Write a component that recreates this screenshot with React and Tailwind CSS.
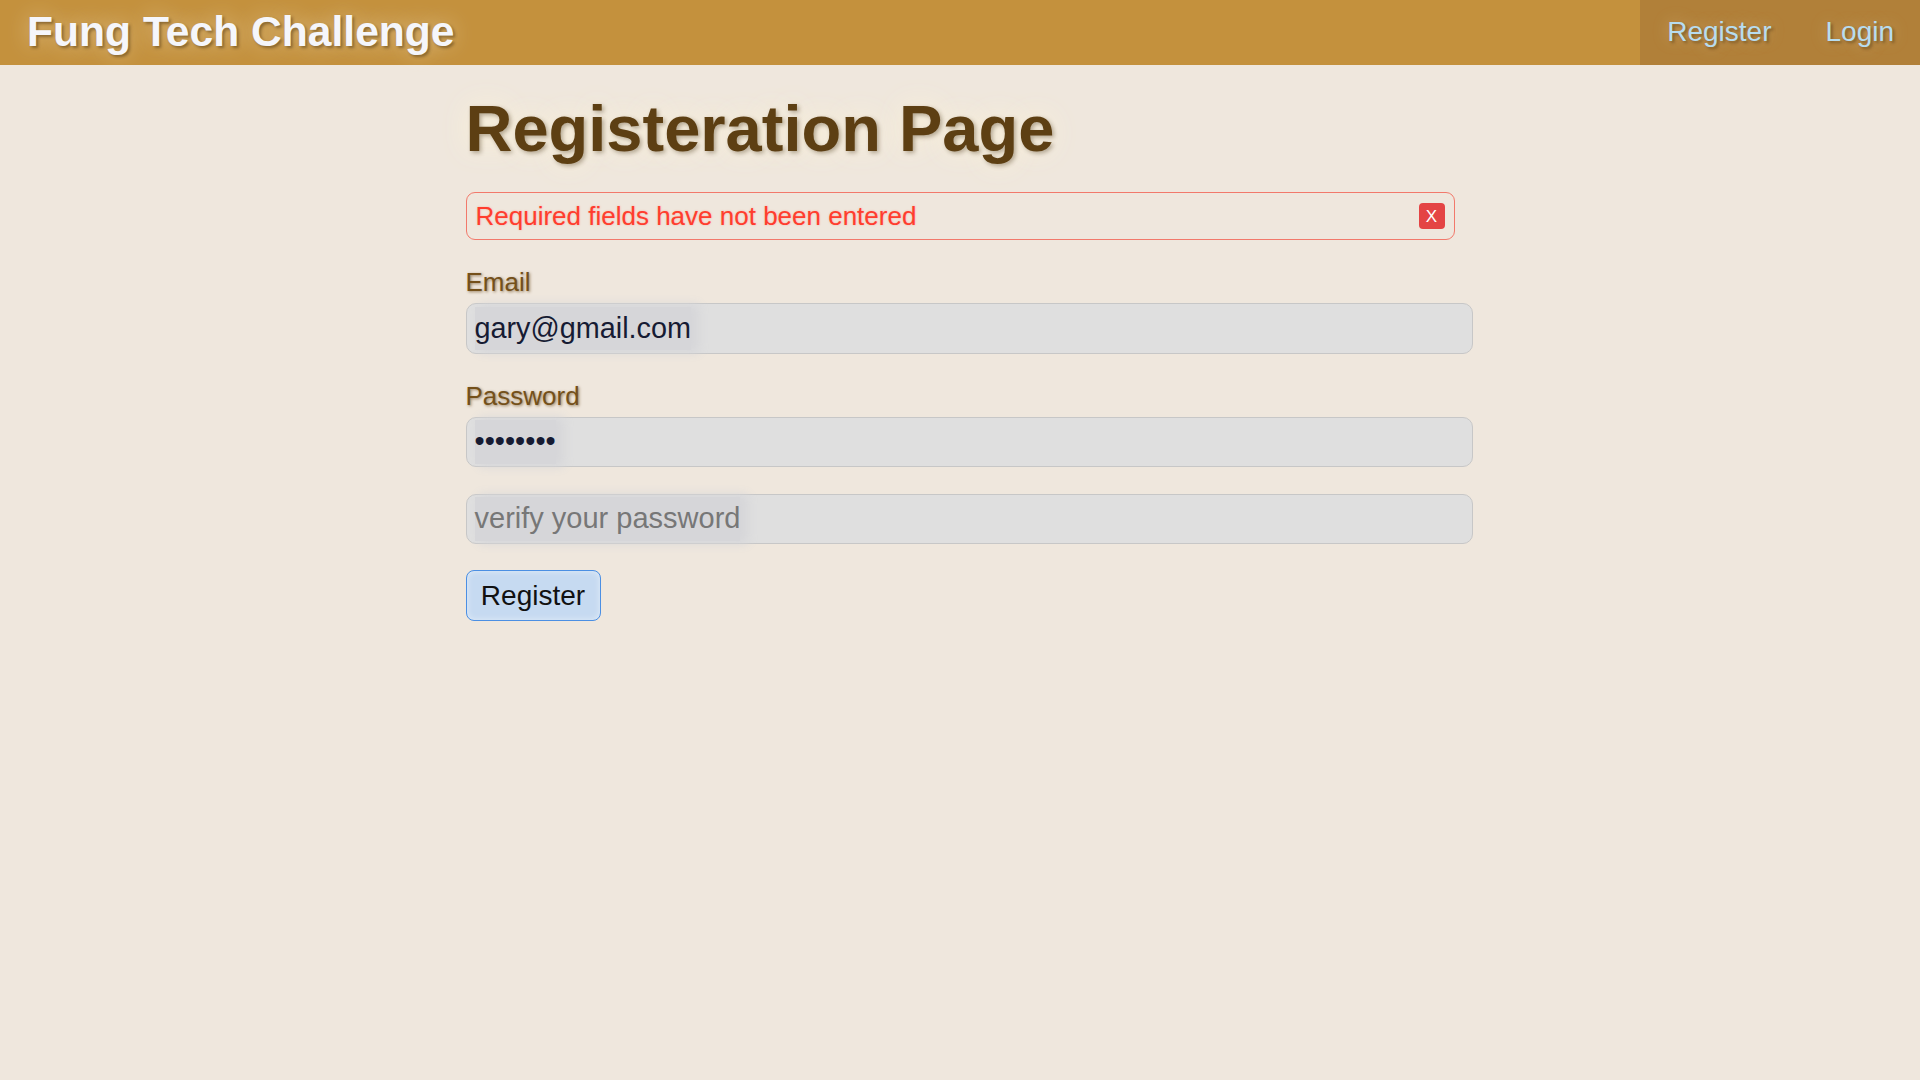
export default function App() {
  const font = { fontFamily: '"Liberation Sans", Arial, Helvetica, sans-serif' };
  return (
    <div className="min-h-screen w-full bg-[#efe7dd]" style={font}>
      <header className="flex h-[65px] w-full items-stretch justify-between bg-[#c4913d]">
        <div className="pl-[27px] pt-[10px] text-[42.6px] font-bold leading-none text-[#f5f6fb] [text-shadow:2px_2px_3px_rgba(60,40,10,0.45),0_0_22px_rgba(255,250,235,0.45)]">
          Fung Tech Challenge
        </div>
        <nav className="flex items-stretch bg-[#b18039]">
          <a className="block pl-[27px] pr-[27px] pt-[18px] text-[28px] leading-none text-[#b7dcef] [text-shadow:2px_2px_3px_rgba(60,40,10,0.45),0_0_16px_rgba(255,240,210,0.35)]">
            Register
          </a>
          <a className="block pl-[27px] pr-[26px] pt-[18px] text-[28px] leading-none text-[#b7dcef] [text-shadow:2px_2px_3px_rgba(60,40,10,0.45),0_0_16px_rgba(255,240,210,0.35)]">
            Login
          </a>
        </nav>
      </header>

      <main className="mx-auto w-[989px]">
        <h1 className="mt-[31px] text-[65px] font-bold leading-none text-[#5d3f13] [text-shadow:2px_2px_4px_rgba(60,40,10,0.35),0_0_28px_rgba(255,245,215,0.9)]">
          Registeration Page
        </h1>

        <div className="mt-[31px] flex h-[48px] items-center justify-between rounded-[9px] border border-[#f2796b] pl-[9px] pr-[9px]">
          <span className="text-[26px] leading-none text-[#ff3d2e] [text-shadow:0_0_2px_rgba(255,60,40,0.35)]">
            Required fields have not been entered
          </span>
          <button className="flex h-[26px] w-[26px] items-center justify-center rounded-[4px] bg-[#e44444] text-[17px] leading-none text-white">
            X
          </button>
        </div>

        <label className="mt-[29px] block text-[26px] leading-none text-[#74501a] [text-shadow:1px_1px_3px_rgba(90,55,5,0.6)]">
          Email
        </label>
        <div className="mt-[8px] flex h-[51px] w-[1007px] items-center rounded-[10px] border border-[#c7c7c7] bg-[#dfdfdf] pl-[8px]">
          <span className="bg-[#d6d6d9] text-[28.8px] text-[#161b33] shadow-[6px_0_10px_2px_#d6d6d9]">
            gary@gmail.com
          </span>
        </div>

        <label className="mt-[29px] block text-[26px] leading-none text-[#74501a] [text-shadow:1px_1px_3px_rgba(90,55,5,0.6)]">
          Password
        </label>
        <div className="mt-[8px] flex h-[50px] w-[1007px] items-center rounded-[10px] border border-[#c7c7c7] bg-[#dfdfdf] pl-[8px]">
          <span className="bg-[#d6d6d9] text-[29px] text-[#161b33] shadow-[6px_0_10px_2px_#d6d6d9]">
            ••••••••
          </span>
        </div>

        <div className="mt-[27px] flex h-[50px] w-[1007px] items-center rounded-[10px] border border-[#c7c7c7] bg-[#dfdfdf] pl-[8px]">
          <span className="bg-[#d6d6d9] text-[29px] text-[#777777] shadow-[6px_0_10px_2px_#d6d6d9]">
            verify your password
          </span>
        </div>

        <button className="mt-[26px] flex h-[51px] w-[135px] items-center justify-center rounded-[8px] border border-[#4b8fe3] bg-[#c6daf1] text-[28px] leading-none text-[#111111] shadow-[inset_0_0_6px_rgba(255,255,255,0.5)]">
          Register
        </button>
      </main>
    </div>
  );
}
